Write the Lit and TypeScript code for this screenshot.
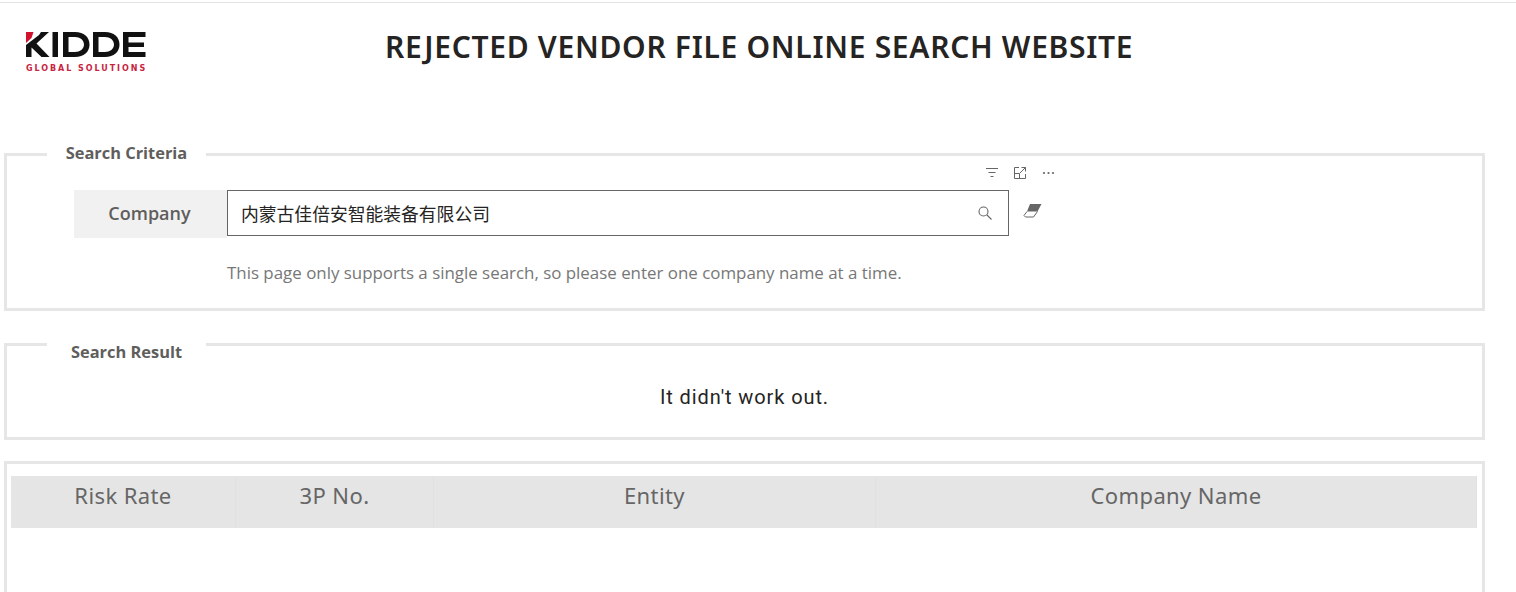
import { LitElement, html, css } from 'lit';
import { customElement } from 'lit/decorators.js';

const COLUMNS = [
  { label: 'Risk Rate', width: 225 },
  { label: '3P No.', width: 198 },
  { label: 'Entity', width: 442 },
  { label: 'Company Name', width: 601 },
];

@customElement('app-root')
export class AppRoot extends LitElement {
  static styles = css`
    :host {
      display: block;
      height: 592px;
      overflow: hidden;
      background: #fff;
      font-family: 'Open Sans', 'Noto Sans CJK SC', sans-serif;
      color: #605e5c;
    }
    .page {
      border-top: 1px solid #e3e3e3;
      margin-top: 2px;
      padding: 0 31px 0 4px;
    }
    .header {
      display: flex;
      height: 139px;
      align-items: flex-start;
    }
    .logo {
      margin: 29px 0 0 22px;
      width: 120px;
      flex: none;
    }
    .logo svg {
      display: block;
    }
    .logo-sub {
      margin-top: 6px;
      font-family: 'DejaVu Sans', sans-serif;
      font-weight: 700;
      font-size: 8px;
      letter-spacing: 1.95px;
      color: #c8243f;
      line-height: 10px;
      white-space: nowrap;
    }
    h1 {
      margin: 24px 0 0 239px;
      font-family: 'Noto Sans', sans-serif;
      font-size: 30px;
      line-height: 40px;
      font-weight: 600;
      letter-spacing: 0.7px;
      color: #252423;
      white-space: nowrap;
    }
    .panel {
      border: 3px solid #e6e6e6;
      margin: 0;
      padding: 0;
      min-width: 0;
    }
    .panel legend {
      font-size: 16.4px;
      font-weight: 700;
      line-height: 22px;
      padding: 0;
      margin-left: 40px;
      width: 159px;
      color: #605e5c;
    }
    .panel legend span {
      display: block;
      text-align: center;
    }
    .criteria {
      height: 169px;
      box-sizing: border-box;
      position: relative;
    }
    .criteria legend {
      padding-bottom: 2px;
    }
    .visual-icons {
      position: absolute;
      top: 0;
      left: 978px;
      display: flex;
      gap: 14px;
      color: #666;
    }
    .visual-icons svg {
      display: block;
    }
    .search-row {
      display: flex;
      margin: 24px 0 0 67px;
      align-items: flex-start;
    }
    .field-label {
      width: 153px;
      height: 48px;
      background: #f1f1f1;
      font-size: 18px;
      font-weight: 600;
      line-height: 46px;
      text-align: center;
      padding-right: 2px;
      box-sizing: border-box;
      flex: none;
    }
    .search-box {
      width: 782px;
      height: 46px;
      box-sizing: border-box;
      border: 1px solid #666;
      display: flex;
      align-items: center;
      justify-content: space-between;
      padding: 0 16px 0 13px;
      flex: none;
    }
    .search-box span {
      font-family: 'Noto Sans CJK SC', sans-serif;
      font-size: 17.8px;
      color: #252423;
    }
    .eraser {
      margin: 13px 0 0 14px;
    }
    .hint {
      margin: 23px 0 0 220px;
      font-size: 16.9px;
      line-height: 24px;
      color: #777;
      white-space: nowrap;
    }
    .result {
      height: 115px;
      box-sizing: border-box;
      margin-top: 14px;
    }
    .result legend {
      padding-top: 16px;
    }
    .result p {
      margin: 21px 0 0;
      text-align: center;
      font-family: 'Roboto', sans-serif;
      font-size: 20px;
      line-height: 26px;
      letter-spacing: 0.9px;
      color: #252423;
    }
    .table-panel {
      margin-top: 21px;
      height: 200px;
      border: 3px solid #e6e6e6;
      padding: 12px 5px 0 4px;
    }
    .thead {
      display: flex;
      height: 52px;
      background: #e5e5e5;
    }
    .thead div {
      font-family: 'Noto Sans', sans-serif;
      font-size: 22px;
      line-height: 38px;
      letter-spacing: 0.4px;
      text-align: center;
      color: #666;
      border-right: 1px solid #e1e1e1;
      box-sizing: border-box;
    }
  `;

  render() {
    return html`
      <div class="page">
        <div class="header">
          <div class="logo">
            <svg width="120" height="26" viewBox="0 0 120 26">
              <path d="M0 0h7.500L5.500 6 0 11z" fill="#d0122d" />
              <path d="M0 13 L13 3 L15 0h8L10.500 11.500 23.500 25h-8L5.500 15.500V25H0z" fill="#111" />
              <rect x="26.500" y="0" width="5.500" height="25" fill="#111" />
              <path fill-rule="evenodd" d="M37 0h12c9 0 14.500 5 14.500 12.500S58 25 49 25H37zM42.500 5v15H49c5 0 9-3 9-7.500S54 5 49 5z" fill="#111" />
              <path fill-rule="evenodd" d="M67 0h12c9 0 14.500 5 14.500 12.500S88 25 79 25H67zM72.500 5v15H79c5 0 9-3 9-7.500S84 5 79 5z" fill="#111" />
              <path d="M97 0h22.500v5H102.500v5.500h15.500v4.500h-15.500V20H119.500v5H97z" fill="#111" />
            </svg>
            <div class="logo-sub">GLOBAL SOLUTIONS</div>
          </div>
          <h1>REJECTED VENDOR FILE ONLINE SEARCH WEBSITE</h1>
        </div>

        <fieldset class="panel criteria">
          <legend><span>Search Criteria</span></legend>
          <div class="visual-icons">
            <svg width="14" height="14" viewBox="0 0 14 14" fill="none" stroke="currentColor">
              <path d="M1 2.500h12M3.500 6.500h7M5.500 10.500h3" />
            </svg>
            <svg width="14" height="14" viewBox="0 0 14 14" fill="none" stroke="currentColor">
              <path d="M6 1.500H1.500v11h11V8M8.500 1.500h4v4M12.500 1.500L7 7M1.500 7.500H6.500V12.500" />
            </svg>
            <svg width="14" height="14" viewBox="0 0 14 14" fill="currentColor">
              <circle cx="3" cy="7" r="1.100" /><circle cx="7.500" cy="7" r="1.100" /><circle cx="12" cy="7" r="1.100" />
            </svg>
          </div>
          <div class="search-row">
            <div class="field-label">Company</div>
            <div class="search-box">
              <span>内蒙古佳倍安智能装备有限公司</span>
              <svg width="14" height="14" viewBox="0 0 14 14" fill="none" stroke="#666" stroke-width="1.100">
                <circle cx="5.500" cy="5.500" r="4.500" /><path d="M9 9l4.500 4.500" />
              </svg>
            </div>
            <svg class="eraser" width="19" height="15" viewBox="0 0 19 15">
              <path d="M7 1H18.500L14.500 8.500 4 8.500z" fill="#666" />
              <path d="M4 8.500L1 12.500 2.500 14H10.500L14.500 8.500" fill="none" stroke="#666" />
            </svg>
          </div>
          <div class="hint">This page only supports a single search, so please enter one company name at a time.</div>
        </fieldset>

        <fieldset class="panel result">
          <legend><span>Search Result</span></legend>
          <p>It didn't work out.</p>
        </fieldset>

        <div class="table-panel">
          <div class="thead">
            ${COLUMNS.map((c) => html`<div style="width:${c.width}px">${c.label}</div>`)}
          </div>
        </div>
      </div>
    `;
  }
}
